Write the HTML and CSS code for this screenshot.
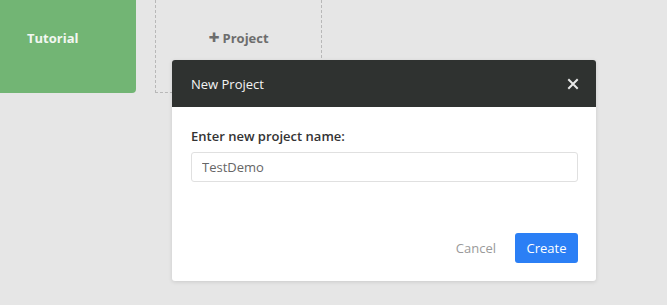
FILE: index.html
```html
<!DOCTYPE html>
<html lang="en">
<head>
  <meta charset="UTF-8">
  <title>New Project</title>
  <link rel="stylesheet" href="styles.css">
</head>
<body>

  <div class="projects">
    <div class="project-card tutorial">Tutorial</div>
    <div class="project-card add-project"><span class="plus">+</span> Project</div>
  </div>

  <div class="modal">
    <div class="modal-header">
      <span class="modal-title">New Project</span>
      <button class="close-btn">
        <svg width="12" height="12" viewBox="0 0 12 12">
          <path d="M2 2 L10 10 M10 2 L2 10" stroke="#e8e8e8" stroke-width="2" stroke-linecap="square"/>
        </svg>
      </button>
    </div>
    <div class="modal-body">
      <label class="field-label" for="projectName">Enter new project name:</label>
      <input type="text" id="projectName" class="field-input" value="TestDemo">
    </div>
    <div class="modal-footer">
      <button class="cancel-btn">Cancel</button>
      <button class="create-btn">Create</button>
    </div>
  </div>

</body>
</html>
```

FILE: styles.css
```css
body {
  margin: 0;
  padding: 0;
  background: #e6e6e6;
  font-family: 'Open Sans', 'Noto Sans', sans-serif;
  height: 305px;
  position: relative;
  overflow: hidden;
}

.projects {
  display: flex;
  gap: 19px;
}

.project-card {
  height: 93px;
  display: flex;
  align-items: center;
  font-size: 13px;
  font-weight: 700;
  box-sizing: border-box;
  padding-bottom: 17px;
}

.tutorial {
  width: 136px;
  background: #72b574;
  color: #f2f7f1;
  padding-left: 27px;
  border-radius: 0 0 4px 0;
}

.add-project {
  width: 167px;
  justify-content: center;
  color: #6d6d6d;
  border: 1px dashed #b8b8b8;
  border-top: none;
}

.plus {
  font-size: 19px;
  font-weight: 800;
  margin-right: 3px;
  line-height: 1;
}

/* dialog */
.modal {
  position: absolute;
  left: 172px;
  top: 60px;
  width: 424px;
  height: 221px;
  background: #fff;
  border-radius: 3px;
  box-shadow: 0 1px 4px rgba(0, 0, 0, 0.12);
  display: flex;
  flex-direction: column;
}

.modal-header {
  height: 47px;
  background: #2f3230;
  border-radius: 3px 3px 0 0;
  display: flex;
  align-items: center;
  justify-content: space-between;
  padding: 0 17px 0 19px;
}

.modal-title {
  color: #f4f4f4;
  font-size: 13px;
}

.close-btn {
  background: none;
  border: none;
  padding: 0;
  width: 12px;
  height: 12px;
  display: flex;
  align-items: center;
  justify-content: center;
  cursor: pointer;
}

.modal-body {
  padding: 20px 18px 0 19px;
  display: flex;
  flex-direction: column;
}

.field-label {
  font-size: 13px;
  font-weight: 600;
  color: #333;
  margin-bottom: 7px;
}

.field-input {
  height: 30px;
  box-sizing: border-box;
  border: 1px solid #e0e0e0;
  border-radius: 3px;
  padding: 0 10px;
  font-family: 'Open Sans', 'Noto Sans', sans-serif;
  font-size: 13px;
  color: #666;
}

.modal-footer {
  margin-top: auto;
  padding: 0 18px 18px 19px;
  display: flex;
  justify-content: flex-end;
  align-items: center;
  gap: 19px;
}

.cancel-btn {
  background: none;
  border: none;
  font-family: 'Open Sans', 'Noto Sans', sans-serif;
  font-size: 13px;
  color: #9a9a9a;
  padding: 0;
  cursor: pointer;
}

.create-btn {
  width: 63px;
  height: 30px;
  background: #2b7ff5;
  color: #fff;
  border: none;
  border-radius: 3px;
  font-family: 'Open Sans', 'Noto Sans', sans-serif;
  font-size: 13px;
  cursor: pointer;
}
```
